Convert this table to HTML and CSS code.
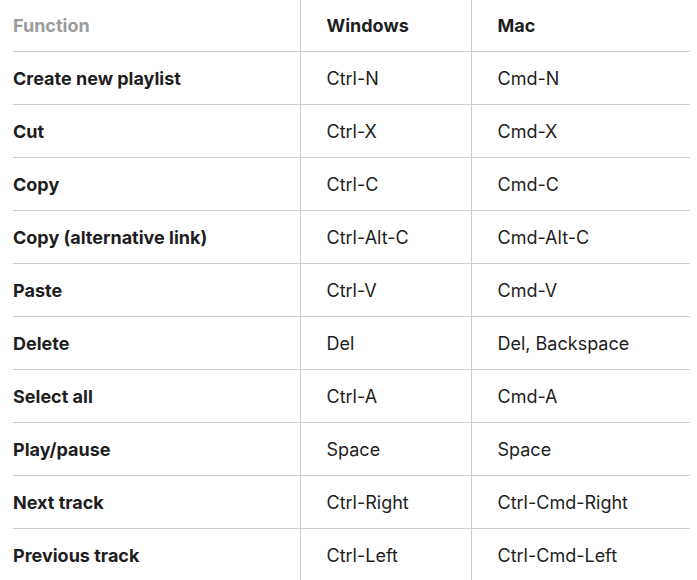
FILE: index.html
```html
<!DOCTYPE html>
<html>
<head>
<meta charset="utf-8">
<link rel="stylesheet" href="styles.css">
</head>
<body>
<table class="shortcuts">
  <colgroup>
    <col class="c-func">
    <col class="c-win">
    <col class="c-mac">
  </colgroup>
  <thead>
    <tr>
      <th class="muted">Function</th>
      <th>Windows</th>
      <th>Mac</th>
    </tr>
  </thead>
  <tbody>
    <tr><td class="fn">Create new playlist</td><td>Ctrl-N</td><td>Cmd-N</td></tr>
    <tr><td class="fn">Cut</td><td>Ctrl-X</td><td>Cmd-X</td></tr>
    <tr><td class="fn">Copy</td><td>Ctrl-C</td><td>Cmd-C</td></tr>
    <tr><td class="fn">Copy (alternative link)</td><td>Ctrl-Alt-C</td><td>Cmd-Alt-C</td></tr>
    <tr><td class="fn">Paste</td><td>Ctrl-V</td><td>Cmd-V</td></tr>
    <tr><td class="fn">Delete</td><td>Del</td><td>Del, Backspace</td></tr>
    <tr><td class="fn">Select all</td><td>Ctrl-A</td><td>Cmd-A</td></tr>
    <tr><td class="fn">Play/pause</td><td>Space</td><td>Space</td></tr>
    <tr><td class="fn">Next track</td><td>Ctrl-Right</td><td>Ctrl-Cmd-Right</td></tr>
    <tr><td class="fn">Previous track</td><td>Ctrl-Left</td><td>Ctrl-Cmd-Left</td></tr>
  </tbody>
</table>
</body>
</html>
```
FILE: styles.css
```css
html, body {
  margin: 0;
  background: #fff;
}
body {
  font-family: "Inter", "Liberation Sans", sans-serif;
  color: #1e1e22;
  overflow: hidden;
}
.shortcuts {
  border-collapse: collapse;
  margin-left: 13px;
  width: 677px;
  table-layout: fixed;
  font-size: 18px;
}
.c-func { width: 287px; }
.c-win { width: 171px; }
.c-mac { width: 219px; }
.shortcuts th,
.shortcuts td {
  height: 52px;
  padding: 0 0 0 26px;
  text-align: left;
  vertical-align: middle;
  border-bottom: 1px solid #cdcdcd;
  white-space: nowrap;
}
.shortcuts th {
  height: 51px;
  font-weight: 700;
}
.shortcuts th + th,
.shortcuts td + td { border-left: 1px solid #cdcdcd; }
.shortcuts th:first-child,
.shortcuts td:first-child { padding-left: 0; }
.shortcuts .fn { font-weight: 700; }
.shortcuts .muted { color: #9b9b9b; }
.shortcuts td { font-weight: 400; }
```
